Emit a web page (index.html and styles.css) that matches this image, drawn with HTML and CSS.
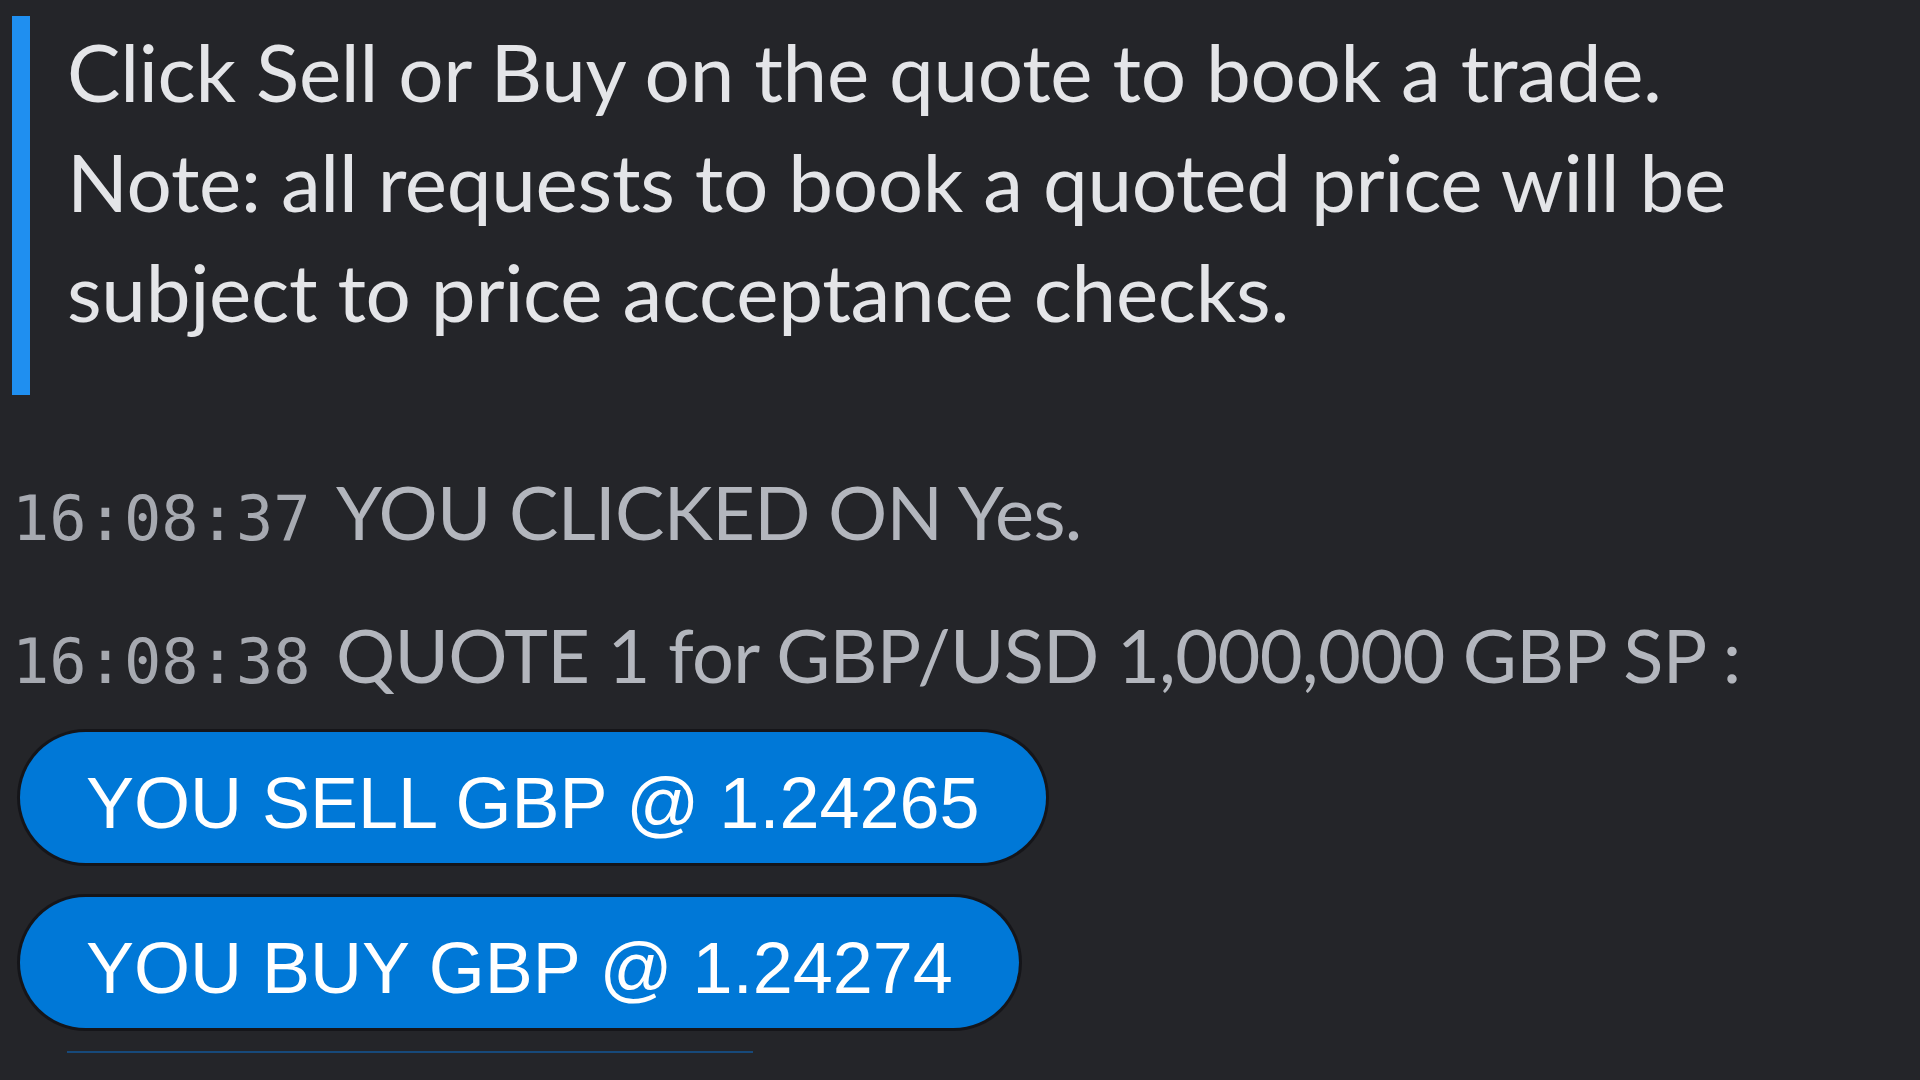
FILE: index.html
```html
<!DOCTYPE html>
<html lang="en">
<head>
<meta charset="utf-8">
<title>Quote</title>
<link rel="stylesheet" href="styles.css">
</head>
<body>
<div class="chat">
  <div class="notice">
    <p>Click Sell or Buy on the quote to book a trade.<br>Note: all requests to book a quoted price will be<br>subject to price acceptance checks.</p>
  </div>
  <div class="msg first"><span class="ts">16:08:37</span> <span class="txt">YOU CLICKED ON Yes.</span></div>
  <div class="msg"><span class="ts">16:08:38</span> <span class="txt">QUOTE 1 for GBP/USD 1,000,000 GBP SP :</span></div>
  <div class="actions">
    <button class="pill">YOU SELL GBP @ 1.24265</button>
    <button class="pill">YOU BUY GBP @ 1.24274</button>
  </div>
  <div class="rule"></div>
</div>
</body>
</html>
```
FILE: styles.css
```css
html, body {
  margin: 0;
  padding: 0;
  background: #242529;
  height: 100%;
  overflow: hidden;
}
.chat {
  padding: 31px 0 0 12px;
  font-family: Lato, "Open Sans", sans-serif;
}
.notice {
  border-left: 18px solid #1f8ff0;
  padding: 0 0 49px 37px;
}
.notice p {
  margin: -15px 0 0;
  font-size: 80px;
  line-height: 110px;
  color: #e4e5e8;
  letter-spacing: -0.3px;
}
.msg {
  margin-top: 33px;
  height: 110px;
  font-size: 74px;
  line-height: 110px;
  color: #b3b6bd;
  white-space: nowrap;
  letter-spacing: -0.7px;
}
.msg.first { margin-top: 62px; }
.ts {
  font-family: "DejaVu Sans Mono", monospace;
  font-size: 62px;
  line-height: 1;
  letter-spacing: 0;
  color: #a6a9b0;
}
.txt {
  padding-left: 7px;
}
.actions {
  margin-top: 22px;
  margin-left: 8px;
  display: flex;
  flex-direction: column;
  align-items: flex-start;
  gap: 34px;
}
.pill {
  height: 131px;
  padding: 10px 66px 0;
  border: none;
  border-radius: 66px;
  background: #0078d7;
  color: #ffffff;
  font-family: "Liberation Sans", Arial, sans-serif;
  font-size: 72px;
  line-height: 1;
  box-shadow: 0 0 0 3px rgba(10, 10, 12, 0.55);
  display: flex;
  align-items: center;
}
.rule {
  margin: 23px 0 0 55px;
  width: 686px;
  height: 2px;
  background: #17497a;
}
```
